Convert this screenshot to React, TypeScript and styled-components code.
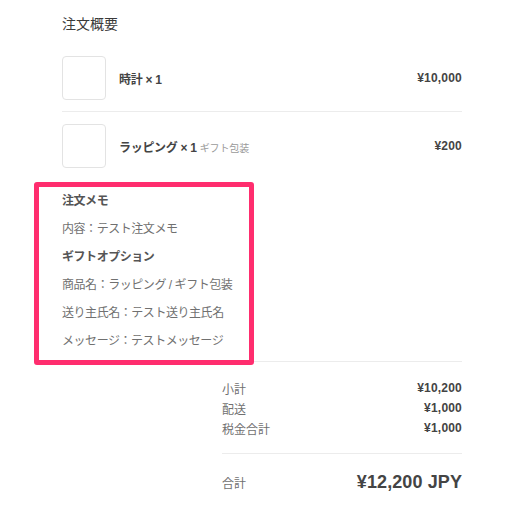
import React from "react";
import styled, { createGlobalStyle } from "styled-components";

const GlobalStyle = createGlobalStyle`
  html, body {
    margin: 0;
    padding: 0;
    background: #ffffff;
  }
  body {
    font-family: "Liberation Sans", "Noto Sans CJK JP", sans-serif;
    color: #333333;
    -webkit-font-smoothing: antialiased;
  }
`;

const Page = styled.div`
  width: 400px;
  padding: 14px 0 0 62px;
`;

const Title = styled.h2`
  margin: 0;
  font-size: 14px;
  line-height: 20px;
  font-weight: 400;
  color: #3a3a3a;
`;

const ItemList = styled.div`
  margin-top: 10px;
  display: flex;
  flex-direction: column;
`;

const ItemRow = styled.div<{ $last?: boolean }>`
  display: flex;
  align-items: center;
  gap: 13px;
  padding: 12px 0 ${(p) => (p.$last ? "12px" : "11px")};
  border-bottom: ${(p) => (p.$last ? "none" : "1px solid #ececec")};
`;

const Thumb = styled.div`
  width: 42px;
  height: 42px;
  border: 1px solid #e3e3e3;
  border-radius: 4px;
  background: #fff;
  flex: none;
`;

const ItemName = styled.div`
  flex: 1;
  font-size: 12px;
  font-weight: 600;
  color: #444444;
  display: flex;
  align-items: baseline;
  gap: 3px;
  letter-spacing: -0.3px;
`;

const Variant = styled.span`
  font-size: 10px;
  font-weight: 400;
  color: #9a9a9a;
  letter-spacing: -0.1px;
`;

const Price = styled.div`
  font-size: 12px;
  font-weight: 700;
  color: #444444;
  letter-spacing: 0.2px;
`;

const Memo = styled.section`
  position: relative;
  margin-top: 7px;
  width: 190px;

  &::before {
    content: "";
    position: absolute;
    top: -5px;
    left: -28px;
    width: 210px;
    bottom: -10px;
    border: 5px solid #ff2d6e;
    border-radius: 3px;
    pointer-events: none;
    z-index: 1;
  }
`;

const MemoLine = styled.div<{ $heading?: boolean }>`
  font-size: 12px;
  line-height: 28px;
  white-space: nowrap;
  letter-spacing: -0.45px;
  font-weight: ${(p) => (p.$heading ? 600 : 400)};
  color: ${(p) => (p.$heading ? "#555555" : "#707070")};
`;

const Totals = styled.div`
  margin: 6px 0 0 160px;
  width: 240px;
  border-top: 1px solid #ececec;
`;

const Breakdown = styled.div`
  padding: 16px 0 15px;
  border-bottom: 1px solid #ececec;
`;

const SummaryRow = styled.div`
  display: flex;
  justify-content: space-between;
  align-items: center;
  height: 20px;
`;

const Label = styled.span`
  font-size: 12px;
  color: #707070;
`;

const Amount = styled.span`
  font-size: 12px;
  font-weight: 700;
  color: #444444;
  letter-spacing: 0.2px;
`;

const GrandRow = styled.div`
  display: flex;
  justify-content: space-between;
  align-items: baseline;
  padding-top: 18px;
  height: 24px;
`;

const GrandAmount = styled.span`
  font-size: 18px;
  font-weight: 700;
  color: #444444;
  letter-spacing: 0.1px;
`;

type Item = { name: string; qty: number; variant?: string; price: string };

const items: Item[] = [
  { name: "時計", qty: 1, price: "¥10,000" },
  { name: "ラッピング", qty: 1, variant: "ギフト包装", price: "¥200" },
];

const memoLines: { text: string; heading?: boolean }[] = [
  { text: "注文メモ", heading: true },
  { text: "内容：テスト注文メモ" },
  { text: "ギフトオプション", heading: true },
  { text: "商品名：ラッピング / ギフト包装" },
  { text: "送り主氏名：テスト送り主氏名" },
  { text: "メッセージ：テストメッセージ" },
];

const summary = [
  { label: "小計", value: "¥10,200" },
  { label: "配送", value: "¥1,000" },
  { label: "税金合計", value: "¥1,000" },
];

export default function App() {
  return (
    <>
      <GlobalStyle />
      <Page>
        <Title>注文概要</Title>
        <ItemList>
          {items.map((item, i) => (
            <ItemRow key={item.name} $last={i === items.length - 1}>
              <Thumb />
              <ItemName>
                <span>
                  {item.name} × {item.qty}
                </span>
                {item.variant && <Variant>{item.variant}</Variant>}
              </ItemName>
              <Price>{item.price}</Price>
            </ItemRow>
          ))}
        </ItemList>
        <Memo>
          {memoLines.map((l) => (
            <MemoLine key={l.text} $heading={l.heading}>
              {l.text}
            </MemoLine>
          ))}
        </Memo>
        <Totals>
          <Breakdown>
            {summary.map((s) => (
              <SummaryRow key={s.label}>
                <Label>{s.label}</Label>
                <Amount>{s.value}</Amount>
              </SummaryRow>
            ))}
          </Breakdown>
          <GrandRow>
            <Label>合計</Label>
            <GrandAmount>¥12,200 JPY</GrandAmount>
          </GrandRow>
        </Totals>
      </Page>
    </>
  );
}
